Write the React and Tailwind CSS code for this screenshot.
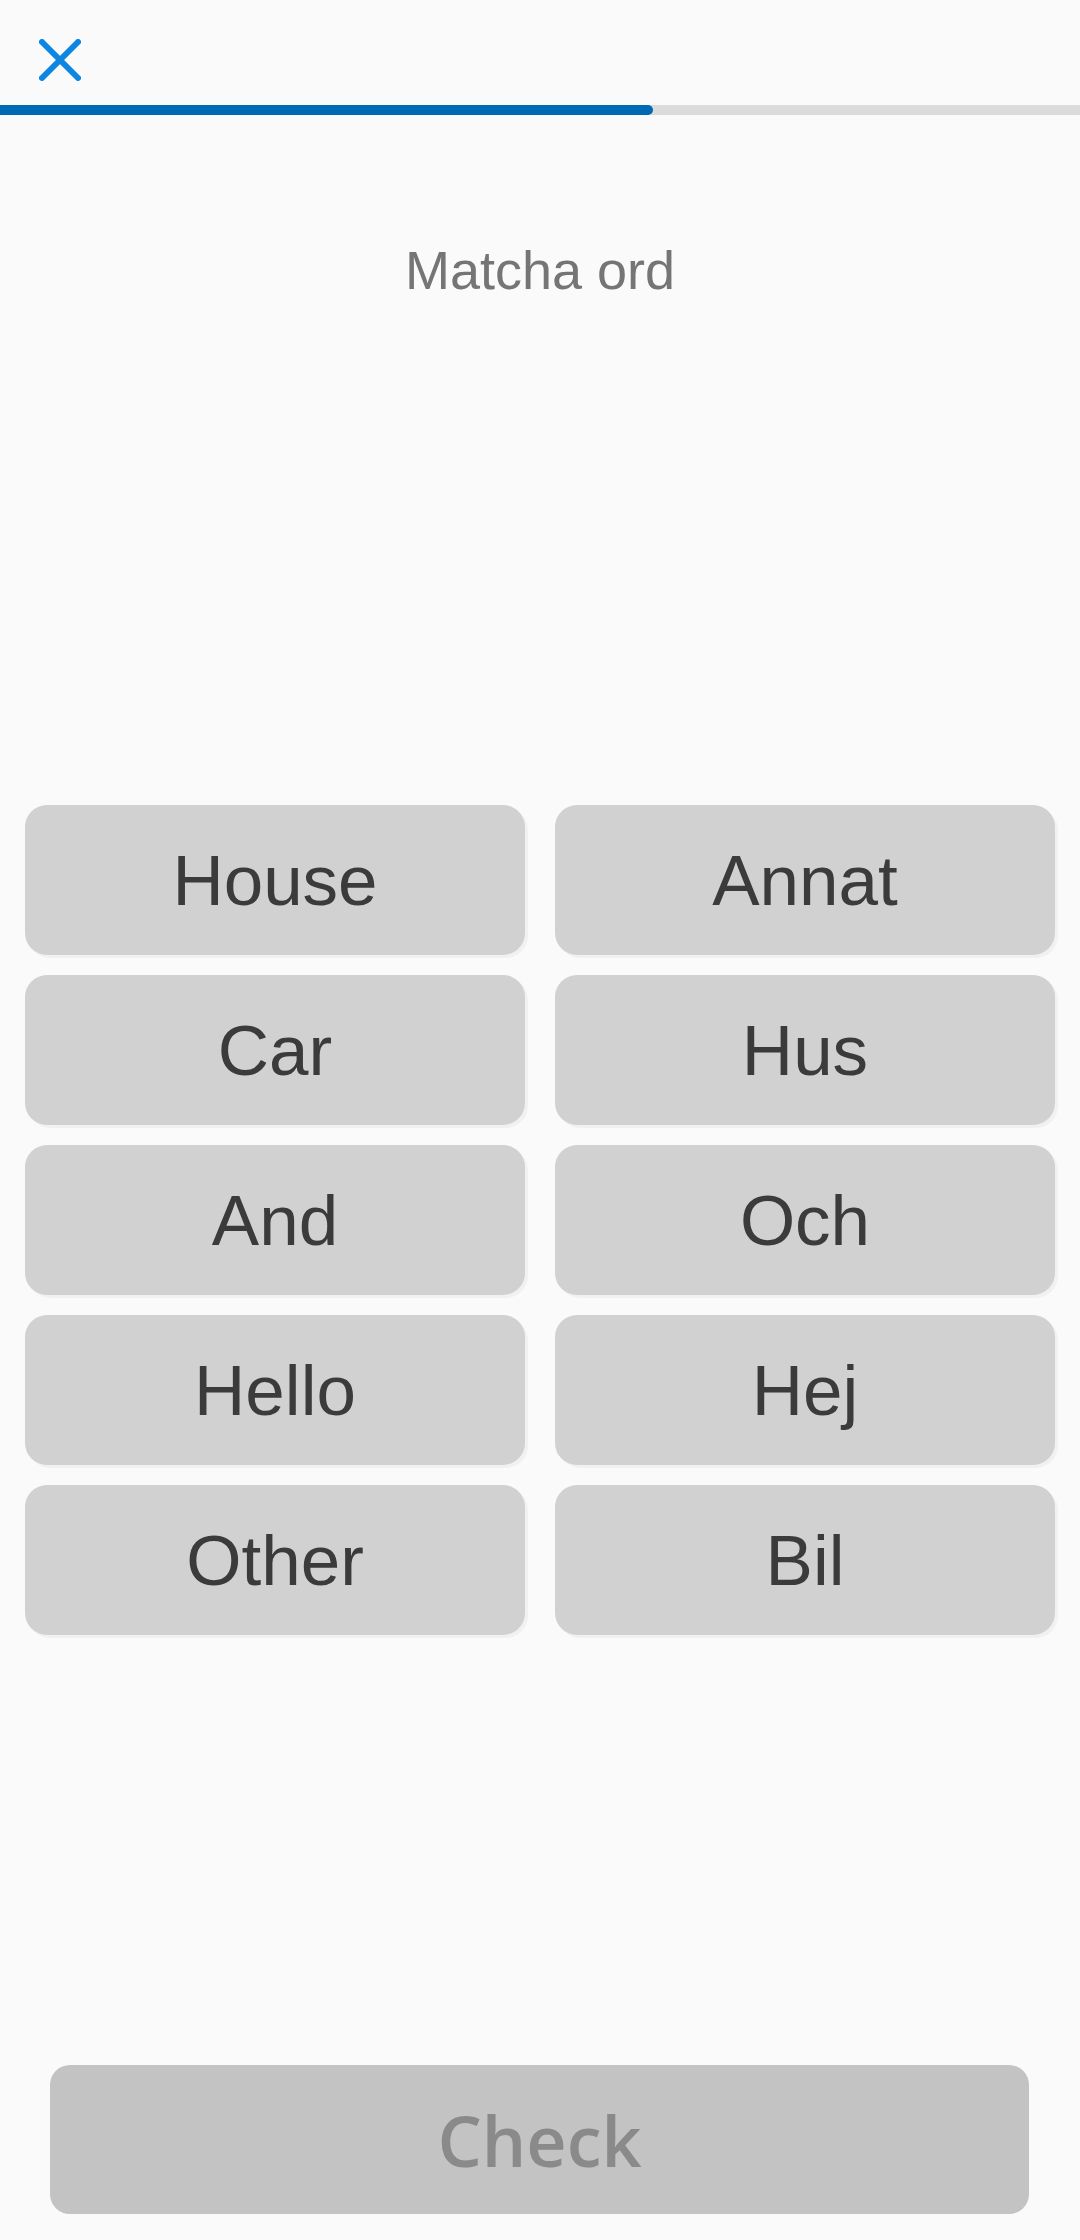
const leftWords = ["House", "Car", "And", "Hello", "Other"];
const rightWords = ["Annat", "Hus", "Och", "Hej", "Bil"];

function WordTile({ word }) {
  return (
    <button className="h-[150px] rounded-[22px] bg-[#d1d1d1] shadow-[3px_3px_0_rgba(0,0,0,0.035)] flex items-center justify-center text-[71px] leading-none text-[#3b3b3b] font-['Liberation_Sans',Arial,sans-serif]">
      {word}
    </button>
  );
}

export default function App() {
  const tiles = [];
  leftWords.forEach((w, i) => {
    tiles.push(w, rightWords[i]);
  });

  return (
    <div className="w-[1080px] h-[2240px] bg-[#fafafa] flex flex-col">
      {/* Top bar */}
      <div className="h-[105px] pl-[39px] pt-[39px]">
        <svg width="42" height="42" viewBox="0 0 42 42">
          <path
            d="M3 3 L39 39 M39 3 L3 39"
            stroke="#0d85e3"
            strokeWidth="6"
            strokeLinecap="round"
            fill="none"
          />
        </svg>
      </div>

      {/* Progress */}
      <div className="h-[10px] bg-[#dbdbdb] w-full">
        <div className="h-full w-[653px] bg-[#0069b4] rounded-r-[5px]" />
      </div>

      {/* Title */}
      <h1 className="mt-[128px] text-center text-[54px] leading-none text-[#757575] font-['Liberation_Sans',Arial,sans-serif]">
        Matcha ord
      </h1>

      {/* Word grid */}
      <div className="mt-[508px] px-[25px] grid grid-cols-2 gap-x-[30px] gap-y-[20px]">
        {tiles.map((w) => (
          <WordTile key={w} word={w} />
        ))}
      </div>

      {/* Check */}
      <div className="mt-auto mb-[26px] pl-[50px] pr-[51px]">
        <button className="w-full h-[149px] rounded-[20px] bg-[#c3c3c3] flex items-center justify-center text-[70px] leading-none font-semibold text-[#8a8a8a] font-['Open_Sans',sans-serif]">
          Check
        </button>
      </div>
    </div>
  );
}
